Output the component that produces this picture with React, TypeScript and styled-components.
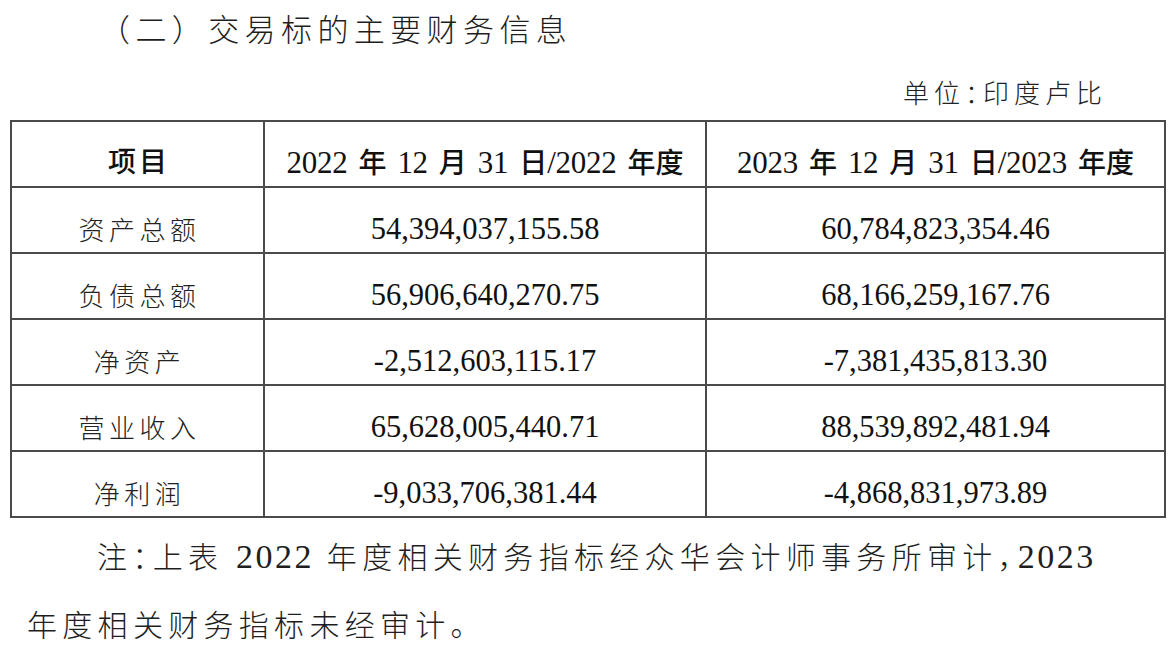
import React from "react";
import styled, { createGlobalStyle } from "styled-components";

const GlobalStyle = createGlobalStyle`
  html, body {
    margin: 0;
    padding: 0;
    background: #ffffff;
  }
  body {
    font-family: "Liberation Serif", "Noto Sans CJK SC", serif;
    color: #1a1a1a;
  }
`;

const Page = styled.div`
  width: 1173px;
  height: 645px;
  overflow: hidden;
  display: flex;
  flex-direction: column;
  background: #fff;
`;

const Title = styled.h2`
  margin: 12px 0 0 0;
  padding-left: 99px;
  font-family: "Liberation Serif", "Noto Sans CJK SC", serif;
  font-weight: 300;
  font-size: 31px;
  line-height: 38px;
  letter-spacing: 5.4px;
  color: #1e1e1e;
`;

const Unit = styled.div`
  margin: 30px 66px 0 0;
  align-self: flex-end;
  font-family: "Liberation Serif", "Noto Sans CJK SC", serif;
  font-weight: 300;
  font-size: 26px;
  line-height: 30px;
  letter-spacing: 5px;
  color: #222;
`;

const Halt = styled.span`
  font-feature-settings: "halt" 1;
`;

/* Latin run (digits) drawn a little taller, like the document's font */
const Latin = styled.span<{ $size: number; $ls: number }>`
  font-family: "Liberation Serif", serif;
  font-weight: 400;
  font-size: ${(p) => p.$size}px;
  letter-spacing: ${(p) => p.$ls}px;
`;

const Table = styled.table`
  margin: 10px 0 0 10px;
  width: 1154px;
  border-collapse: collapse;
  table-layout: fixed;
  border: 2px solid #4a4a4a;
`;

const Col = styled.col<{ $w: number }>`
  width: ${(p) => p.$w}px;
`;

const Row = styled.tr`
  height: 66px;
`;

const HeadCell = styled.th<{ $cjk?: boolean }>`
  border: 2px solid #4a4a4a;
  padding: 18px 0 0 ${(p) => (p.$cjk ? "3px" : "0")};
  text-align: center;
  vertical-align: middle;
  font-family: "Liberation Serif", "Noto Sans CJK SC", serif;
  font-weight: 500;
  font-size: 28px;
  line-height: 32px;
  letter-spacing: ${(p) => (p.$cjk ? "3px" : "0")};
  word-spacing: 4px;
  color: #111;
  white-space: nowrap;
`;

const LabelCell = styled.td`
  border: 2px solid #4a4a4a;
  padding: 18px 0 0 4px;
  text-align: center;
  vertical-align: middle;
  font-family: "Noto Sans CJK SC", sans-serif;
  font-weight: 300;
  font-size: 26px;
  line-height: 32px;
  letter-spacing: 4.5px;
  color: #222;
  white-space: nowrap;
`;

const NumCell = styled.td`
  border: 2px solid #4a4a4a;
  padding: 18px 0 0 0;
  text-align: center;
  vertical-align: middle;
  font-family: "Liberation Serif", serif;
  font-size: 30.5px;
  line-height: 32px;
  color: #111;
  white-space: nowrap;
`;

const Note = styled.p`
  margin: 5px 0 0 0;
  padding-left: 27px;
  text-indent: 70px;
  font-family: "Liberation Serif", "Noto Sans CJK SC", serif;
  font-weight: 300;
  font-size: 30px;
  line-height: 68px;
  letter-spacing: 5.3px;
  color: #1e1e1e;
  white-space: nowrap;
`;

const rows: [string, string, string][] = [
  ["资产总额", "54,394,037,155.58", "60,784,823,354.46"],
  ["负债总额", "56,906,640,270.75", "68,166,259,167.76"],
  ["净资产", "-2,512,603,115.17", "-7,381,435,813.30"],
  ["营业收入", "65,628,005,440.71", "88,539,892,481.94"],
  ["净利润", "-9,033,706,381.44", "-4,868,831,973.89"],
];

function HeadDate({ year }: { year: string }) {
  return (
    <>
      <Latin $size={31} $ls={-0.3}>{year}</Latin> 年{" "}
      <Latin $size={31} $ls={-0.3}>12</Latin> 月{" "}
      <Latin $size={31} $ls={-0.3}>31</Latin> 日
      <Latin $size={31} $ls={-0.3}>/{year}</Latin> 年度
    </>
  );
}

export default function App() {
  return (
    <Page>
      <GlobalStyle />
      <Title>（二）交易标的主要财务信息</Title>
      <Unit>
        单位<Halt>：</Halt>印度卢比
      </Unit>
      <Table>
        <colgroup>
          <Col $w={253} />
          <Col $w={442} />
          <Col $w={459} />
        </colgroup>
        <thead>
          <Row>
            <HeadCell $cjk>项目</HeadCell>
            <HeadCell>
              <HeadDate year="2022" />
            </HeadCell>
            <HeadCell>
              <HeadDate year="2023" />
            </HeadCell>
          </Row>
        </thead>
        <tbody>
          {rows.map(([label, a, b]) => (
            <Row key={label}>
              <LabelCell>{label}</LabelCell>
              <NumCell>{a}</NumCell>
              <NumCell>{b}</NumCell>
            </Row>
          ))}
        </tbody>
      </Table>
      <Note>
        注<Halt>：</Halt>上表 <Latin $size={34} $ls={2.5}>2022</Latin> 年度相关财务指标经众华会计师事务所审计<Halt>，</Halt>
        <Latin $size={34} $ls={2.5}>2023</Latin>
        <br />
        年度相关财务指标未经审计。
      </Note>
    </Page>
  );
}
